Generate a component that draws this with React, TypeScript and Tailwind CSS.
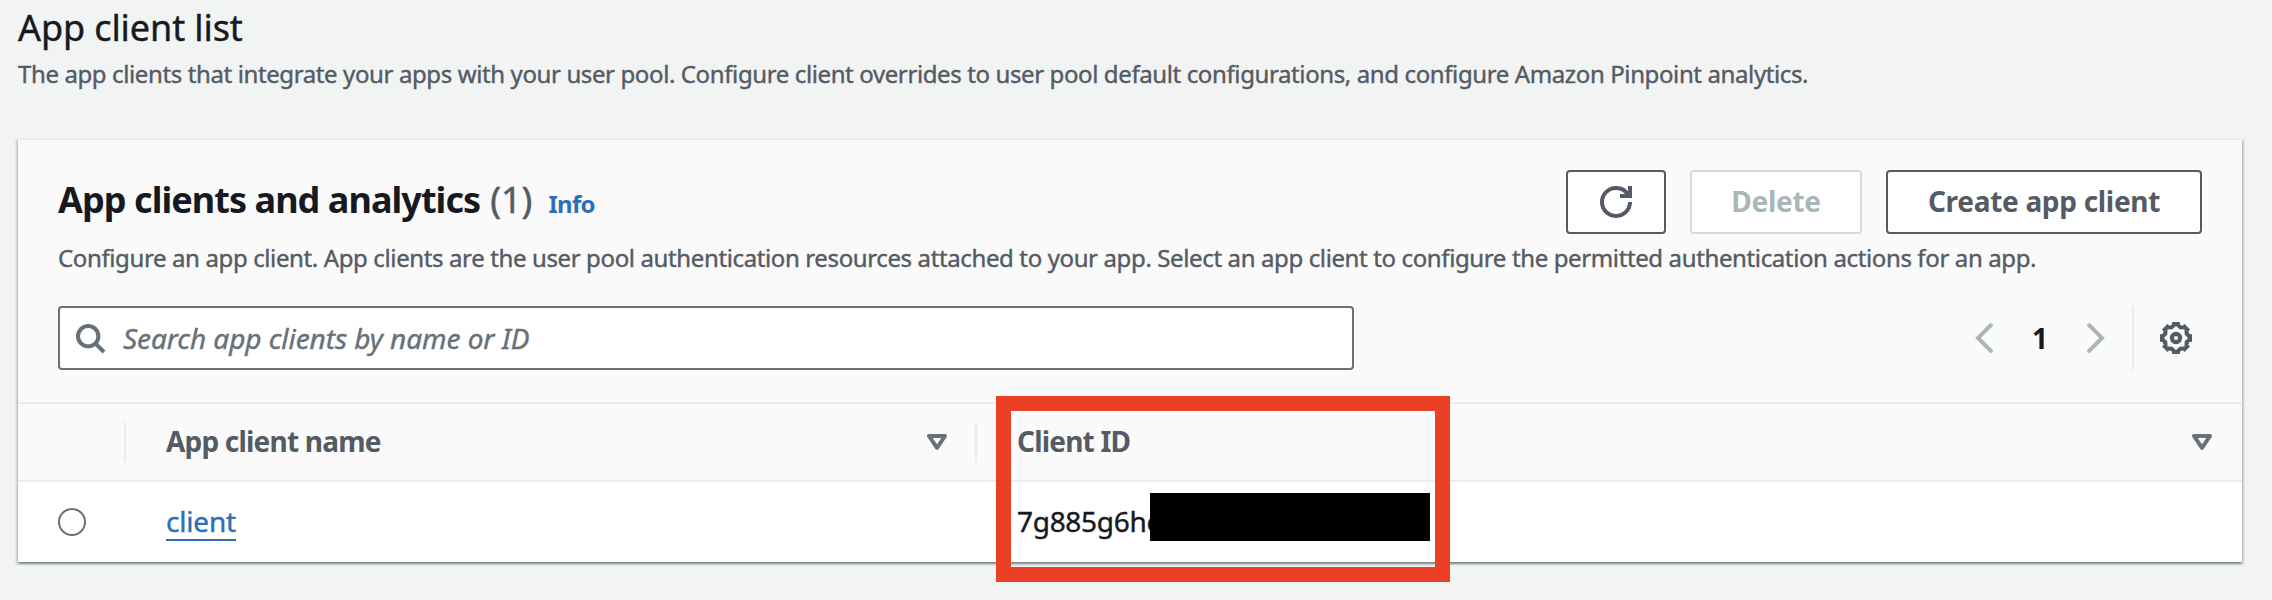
import type { ReactNode } from "react";

function RefreshIcon() {
  return (
    <svg className="size-8" viewBox="0 0 16 16" fill="none" stroke="currentColor" strokeWidth="2">
      <path d="M10 5h5V0" />
      <path d="M15 8a6.957 6.957 0 0 1-7 7 6.957 6.957 0 0 1-7-7 6.957 6.957 0 0 1 7-7 6.87 6.87 0 0 1 6.3 4" />
    </svg>
  );
}

function SearchIcon() {
  return (
    <svg className="size-8 shrink-0 text-[#687078]" viewBox="0 0 32 32" fill="none" stroke="currentColor" strokeWidth="4">
      <circle cx="14.2" cy="14.2" r="10.2" />
      <path d="m21.3 21.3 8.7 8.7" />
    </svg>
  );
}

function ChevronIcon({ d }: { d: string }) {
  return (
    <svg className="size-8 text-[#aab7b8]" viewBox="0 0 16 16" fill="none" stroke="currentColor" strokeWidth="2">
      <path d={d} />
    </svg>
  );
}

// Rotates a point given on the horizontal tooth axis to tooth number i.
function toothPoint(i: number, x: number, y: number) {
  const a = (i * Math.PI) / 4;
  const px = 8 + x * Math.cos(a) - y * Math.sin(a);
  const py = 8 + x * Math.sin(a) + y * Math.cos(a);
  return `${px.toFixed(2)} ${py.toFixed(2)}`;
}

const teeth = [0, 1, 2, 3, 4, 5, 6, 7];
const gearOuter = teeth
  .map((i) => [toothPoint(i, 6.7, -2), toothPoint(i, 8, -1.9), toothPoint(i, 8, 1.9), toothPoint(i, 6.7, 2)].join("L"))
  .join("L");
const gearInner = teeth.map((i) => `${toothPoint(i, 6, 0)}L${toothPoint(i + 0.5, 4.7, 0)}`).join("L");

function GearIcon() {
  return (
    <svg className="size-8 text-[#545b64]" viewBox="0 0 16 16" fill="currentColor">
      <path fillRule="evenodd" d={`M${gearOuter}ZM${gearInner}Z`} />
      <circle cx="8" cy="8" r="2.05" fill="none" stroke="currentColor" strokeWidth="2.1" />
    </svg>
  );
}

function SortIcon() {
  return (
    <svg className="h-4 w-5 text-[#687078]" viewBox="0 0 20 16" fill="none" stroke="currentColor" strokeWidth="4" strokeLinejoin="round">
      <path d="M2 2h16l-8 11.8z" />
    </svg>
  );
}

function Button({ className, children }: { className: string; children: ReactNode }) {
  return (
    <button
      className={`flex h-16 items-center justify-center rounded-[4px] border-2 bg-white text-[28px] font-bold leading-none tracking-[-0.3px] ${className}`}
    >
      {children}
    </button>
  );
}

export default function App() {
  return (
    <div className="relative h-[600px] w-[2272px] overflow-hidden whitespace-nowrap bg-[#f2f3f3] px-[18px] font-['Noto_Sans','Open_Sans',sans-serif] text-[#16191f]">
      <h1 className="pt-px text-[36px] leading-[54px] tracking-[-0.1px] [-webkit-text-stroke:0.4px]">App client list</h1>
      <p className="mt-px text-[24px] leading-9 tracking-[-0.385px] text-[#545b64] [-webkit-text-stroke:0.4px]">
        The app clients that integrate your apps with your user pool. Configure client overrides to user pool default
        configurations, and configure Amazon Pinpoint analytics.
      </p>

      <section className="mt-[46px] w-[2224px] border-t-2 border-[#eaeded] bg-[#fafafa] shadow-[0_2px_2px_0_rgba(0,28,36,0.3),2px_2px_2px_0_rgba(0,28,36,0.15),-2px_2px_2px_0_rgba(0,28,36,0.15)]">
        <header className="border-b-2 border-[#eaeded] px-10 pb-8 pt-[30px]">
          <div className="flex h-[70px] items-start justify-between">
            <div className="flex items-baseline pt-2 leading-[44px]">
              <h2 className="text-[36px] font-bold tracking-[-0.94px]">App clients and analytics</h2>
              <span className="ml-[10px] text-[36px] text-[#545b64] [-webkit-text-stroke:0.5px]">(1)</span>
              <a className="ml-4 text-[24px] font-bold tracking-[-0.7px] text-[#2b6fba]">Info</a>
            </div>
            <div className="flex gap-6">
              <Button className="w-[100px] border-[#545b64] text-[#545b64]">
                <RefreshIcon />
              </Button>
              <Button className="w-[172px] border-[#d5dbdb] pb-0.5 text-[#aab7b8]">Delete</Button>
              <Button className="w-[316px] border-[#545b64] pb-0.5 text-[#545b64]">Create app client</Button>
            </div>
          </div>
          <p className="text-[24px] leading-9 tracking-[-0.375px] text-[#545b64] [-webkit-text-stroke:0.4px]">
            Configure an app client. App clients are the user pool authentication resources attached to your app. Select
            an app client to configure the permitted authentication actions for an app.
          </p>
          <div className="mt-[30px] flex h-16 justify-between">
            <div className="flex w-[1296px] items-center gap-[17px] rounded-[4px] border-2 border-[#687078] bg-white pl-[14px]">
              <SearchIcon />
              <span className="text-[28px] italic leading-none tracking-[-0.06px] text-[#687078] [-webkit-text-stroke:0.4px]">
                Search app clients by name or ID
              </span>
            </div>
            <div className="flex items-center pr-[10px]">
              <ChevronIcon d="m12 1-7 7 7 7" />
              <span className="w-20 text-center text-[28px] font-bold leading-none">1</span>
              <ChevronIcon d="m4 1 7 7-7 7" />
              <span className="ml-5 mr-[26px] h-16 w-0.5 bg-[#eaeded]" />
              <GearIcon />
            </div>
          </div>
        </header>

        <div className="flex h-[78px] items-center border-b-2 border-[#eaeded] text-[28px] font-bold leading-none text-[#545b64]">
          <div className="h-10 w-[108px] border-r-2 border-[#eaeded]" />
          <div className="flex h-10 w-[851px] items-center justify-between border-r-2 border-[#eaeded] pl-10 pr-7">
            <span className="pb-0.5 tracking-[-0.8px]">App client name</span>
            <SortIcon />
          </div>
          <div className="flex flex-1 items-center justify-between pl-10 pr-[30px]">
            <span className="pb-0.5 tracking-[-0.8px]">Client ID</span>
            <SortIcon />
          </div>
        </div>

        <div className="flex h-20 items-center bg-white text-[28px]">
          <div className="w-[108px] pl-10">
            <span className="block size-7 rounded-full border-2 border-[#687078]" />
          </div>
          <div className="flex w-[850px] pl-10">
            <a className="border-b-2 border-[#2b6fba] leading-9 tracking-[-0.2px] text-[#2b6fba] [-webkit-text-stroke:0.4px]">
              client
            </a>
          </div>
          <div className="relative flex flex-1 pb-0.5 pl-[41px] leading-none tracking-[-0.3px] [-webkit-text-stroke:0.4px]">
            <span>7g885g6hc</span>
            <span className="absolute -top-[14px] left-[174px] h-12 w-[280px] bg-black" />
          </div>
        </div>
      </section>

      <div className="absolute left-[996px] top-[396px] h-[186px] w-[454px] border-[15px] border-[#eb4026]" />
    </div>
  );
}
